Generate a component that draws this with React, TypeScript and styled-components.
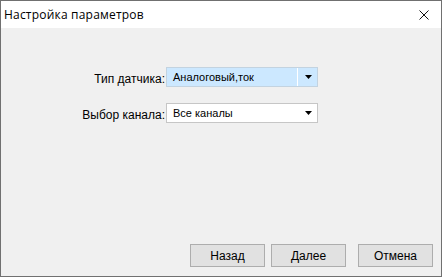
import React from "react";
import styled, { createGlobalStyle } from "styled-components";

const Global = createGlobalStyle`
  html, body { margin: 0; padding: 0; background: #ffffff; }
  body { font-family: "Liberation Sans", Arial, sans-serif; }
  * { box-sizing: border-box; }
`;

const Window = styled.div`
  width: 442px;
  height: 277px;
  border: 1px solid #707070;
  display: flex;
  flex-direction: column;
  background: #f0f0f0;
`;

const TitleBar = styled.div`
  height: 27px;
  background: #ffffff;
  display: flex;
  align-items: center;
  justify-content: space-between;
  padding-left: 3px;
  padding-right: 12px;
`;

const Title = styled.span`
  font-family: "Open Sans", "Noto Sans", sans-serif;
  font-size: 12px;
  letter-spacing: 0.2px;
  color: #000000;
  line-height: 27px;
`;

const CloseBtn = styled.div`
  width: 10px;
  height: 10px;
  display: flex;
  margin-top: 1px;
`;

const Body = styled.div`
  flex: 1;
  display: flex;
  flex-direction: column;
  padding-top: 39px;
  padding-bottom: 9px;
`;

const Form = styled.div`
  display: grid;
  grid-template-columns: 164px 152px;
  column-gap: 1px;
  row-gap: 16px;
  align-items: center;
`;

const Label = styled.label`
  justify-self: end;
  font-size: 12px;
  color: #000000;
  padding-top: 3px;
`;

const Combo = styled.div<{ $active?: boolean }>`
  height: 20px;
  border: 1px solid ${(p) => (p.$active ? "#c3d3e0" : "#c6c6c6")};
  background: ${(p) => (p.$active ? "#cce8ff" : "#ffffff")};
  display: flex;
  align-items: stretch;
`;

const ComboText = styled.div<{ $active?: boolean }>`
  flex: 1;
  font-size: 11px;
  color: #000000;
  padding-left: 6px;
  display: flex;
  align-items: center;
  background: ${(p) => (p.$active ? "#cce8ff" : "#ffffff")};
  border-right: ${(p) => (p.$active ? "1px solid #ffffff" : "none")};
  margin-right: ${(p) => (p.$active ? "1px" : "0")};
`;

const Arrow = styled.div<{ $active?: boolean }>`
  width: 18px;
  display: flex;
  align-items: center;
  justify-content: center;
  background: ${(p) => (p.$active ? "#cce8ff" : "#ffffff")};
`;

const Buttons = styled.div`
  margin-top: auto;
  display: flex;
  justify-content: flex-end;
  padding-right: 8px;
`;

const Button = styled.button<{ $gap?: number }>`
  width: 75px;
  height: 23px;
  margin-left: ${(p) => p.$gap ?? 6}px;
  background: #e1e1e1;
  border: 1px solid #adadad;
  font-family: "Liberation Sans", Arial, sans-serif;
  font-size: 12px;
  color: #000000;
  padding: 0;
`;

const Tri = () => (
  <svg width="7" height="4" viewBox="0 0 7 4">
    <path d="M0 0 H7 L3.5 4 Z" fill="#000" />
  </svg>
);

export default function App() {
  return (
    <>
      <Global />
      <Window>
        <TitleBar>
          <Title>Настройка параметров</Title>
          <CloseBtn>
            <svg width="10" height="10" viewBox="0 0 10 10">
              <path d="M0.5 0.5 L9.5 9.5 M9.5 0.5 L0.5 9.5" stroke="#111" strokeWidth="1" />
            </svg>
          </CloseBtn>
        </TitleBar>
        <Body>
          <Form>
            <Label>Тип датчика:</Label>
            <Combo $active>
              <ComboText $active>Аналоговый,ток</ComboText>
              <Arrow $active>
                <Tri />
              </Arrow>
            </Combo>
            <Label>Выбор канала:</Label>
            <Combo>
              <ComboText>Все каналы</ComboText>
              <Arrow>
                <Tri />
              </Arrow>
            </Combo>
          </Form>
          <Buttons>
            <Button>Назад</Button>
            <Button>Далее</Button>
            <Button $gap={12}>Отмена</Button>
          </Buttons>
        </Body>
      </Window>
    </>
  );
}
